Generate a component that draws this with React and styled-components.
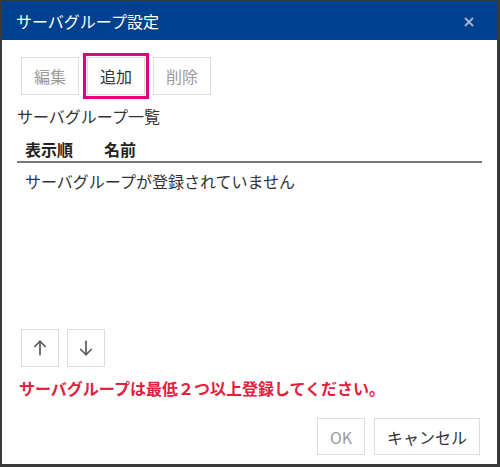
import React from "react";
import styled, { createGlobalStyle } from "styled-components";

const GlobalStyle = createGlobalStyle`
  html, body {
    margin: 0;
    padding: 0;
    background: #3a3a3a;
  }
  body {
    font-family: "Noto Sans CJK JP", "Noto Sans", sans-serif;
  }
`;

const App = () => {
  return (
    <>
      <GlobalStyle />
      <Dialog>
        <Header>
          <Title>サーバグループ設定</Title>
          <CloseButton aria-label="close">
            <svg width="10" height="10" viewBox="0 0 10 10">
              <path d="M1 1 L9 9 M9 1 L1 9" stroke="#9fb2cf" strokeWidth="2" />
            </svg>
          </CloseButton>
        </Header>

        <Body>
          <Toolbar>
            <Button disabled>編集</Button>
            <Button focused>追加</Button>
            <Button disabled>削除</Button>
          </Toolbar>

          <SectionTitle>サーバグループ一覧</SectionTitle>

          <Table>
            <HeadRow>
              <OrderCol>表示順</OrderCol>
              <NameCol>名前</NameCol>
            </HeadRow>
            <EmptyRow>サーバグループが登録されていません</EmptyRow>
          </Table>

          <Toolbar>
            <IconButton aria-label="up">
              <svg width="18" height="18" viewBox="0 0 24 24" fill="none" stroke="#555" strokeWidth="2.2" strokeLinecap="round" strokeLinejoin="round">
                <path d="m5 10 7-7 7 7" />
                <path d="M12 21V3" />
              </svg>
            </IconButton>
            <IconButton aria-label="down">
              <svg width="18" height="18" viewBox="0 0 24 24" fill="none" stroke="#555" strokeWidth="2.2" strokeLinecap="round" strokeLinejoin="round">
                <path d="M12 3v18" />
                <path d="m19 14-7 7-7-7" />
              </svg>
            </IconButton>
          </Toolbar>

          <ErrorText>サーバグループは最低２つ以上登録してください。</ErrorText>

          <Footer>
            <Button disabled width="48px">OK</Button>
            <Button width="106px">キャンセル</Button>
          </Footer>
        </Body>
      </Dialog>
    </>
  );
};

// styled components
const Dialog = styled.div`
  margin: 1px 3px 0 2px;
  height: 463px;
  background: #fff;
  display: flex;
  flex-direction: column;
`;

const Header = styled.div`
  height: 39px;
  background: #00418f;
  display: flex;
  align-items: center;
  justify-content: space-between;
  padding: 0 23px 0 14px;
`;

const Title = styled.h1`
  margin: 0;
  color: #fff;
  font-size: 16px;
  font-weight: 400;
  line-height: 24px;
`;

const CloseButton = styled.button`
  border: none;
  background: none;
  padding: 0;
  display: flex;
  margin-top: 3px;
`;

const Body = styled.div`
  flex: 1;
  display: flex;
  flex-direction: column;
  padding: 17px 15px 9px 15px;
  color: #333;
`;

const Toolbar = styled.div`
  display: flex;
  gap: 8px;
  padding-left: 4px;
`;

const Button = styled.button`
  box-sizing: border-box;
  width: ${props => props.width || "58px"};
  height: ${props => (props.width ? "37px" : "38px")};
  padding: 0;
  background: #fff;
  border: 1px solid #dcdcdc;
  outline: ${props => (props.focused ? "3px solid #e4007f" : "none")};
  outline-offset: 1px;
  font-family: inherit;
  font-size: 16px;
  color: ${props => (props.disabled ? "#9a9a9a" : "#333")};
  line-height: 1;
`;

const IconButton = styled.button`
  box-sizing: border-box;
  width: 38px;
  height: 38px;
  padding: 0;
  background: #fff;
  border: 1px solid #dcdcdc;
  display: flex;
  align-items: center;
  justify-content: center;
`;

const SectionTitle = styled.div`
  margin-top: 9px;
  font-size: 16px;
  line-height: 24px;
`;

const Table = styled.div`
  flex: 1;
  margin-top: 8px;
`;

const HeadRow = styled.div`
  display: flex;
  height: 25px;
  align-items: center;
  border-bottom: 2px solid #777;
  font-size: 16px;
  font-weight: 700;
  color: #222;
`;

const OrderCol = styled.span`
  width: 80px;
  padding-left: 8px;
  box-sizing: border-box;
`;

const NameCol = styled.span`
  padding-left: 7px;
`;

const EmptyRow = styled.div`
  height: 36px;
  line-height: 36px;
  padding-left: 8px;
  font-size: 16px;
`;

const ErrorText = styled.div`
  margin-top: 9px;
  font-size: 16px;
  line-height: 24px;
  font-weight: 700;
  color: #e5203b;
  padding-left: 2px;
`;

const Footer = styled.div`
  margin-top: 18px;
  margin-right: 2px;
  display: flex;
  justify-content: flex-end;
  gap: 9px;
`;

export default App;
